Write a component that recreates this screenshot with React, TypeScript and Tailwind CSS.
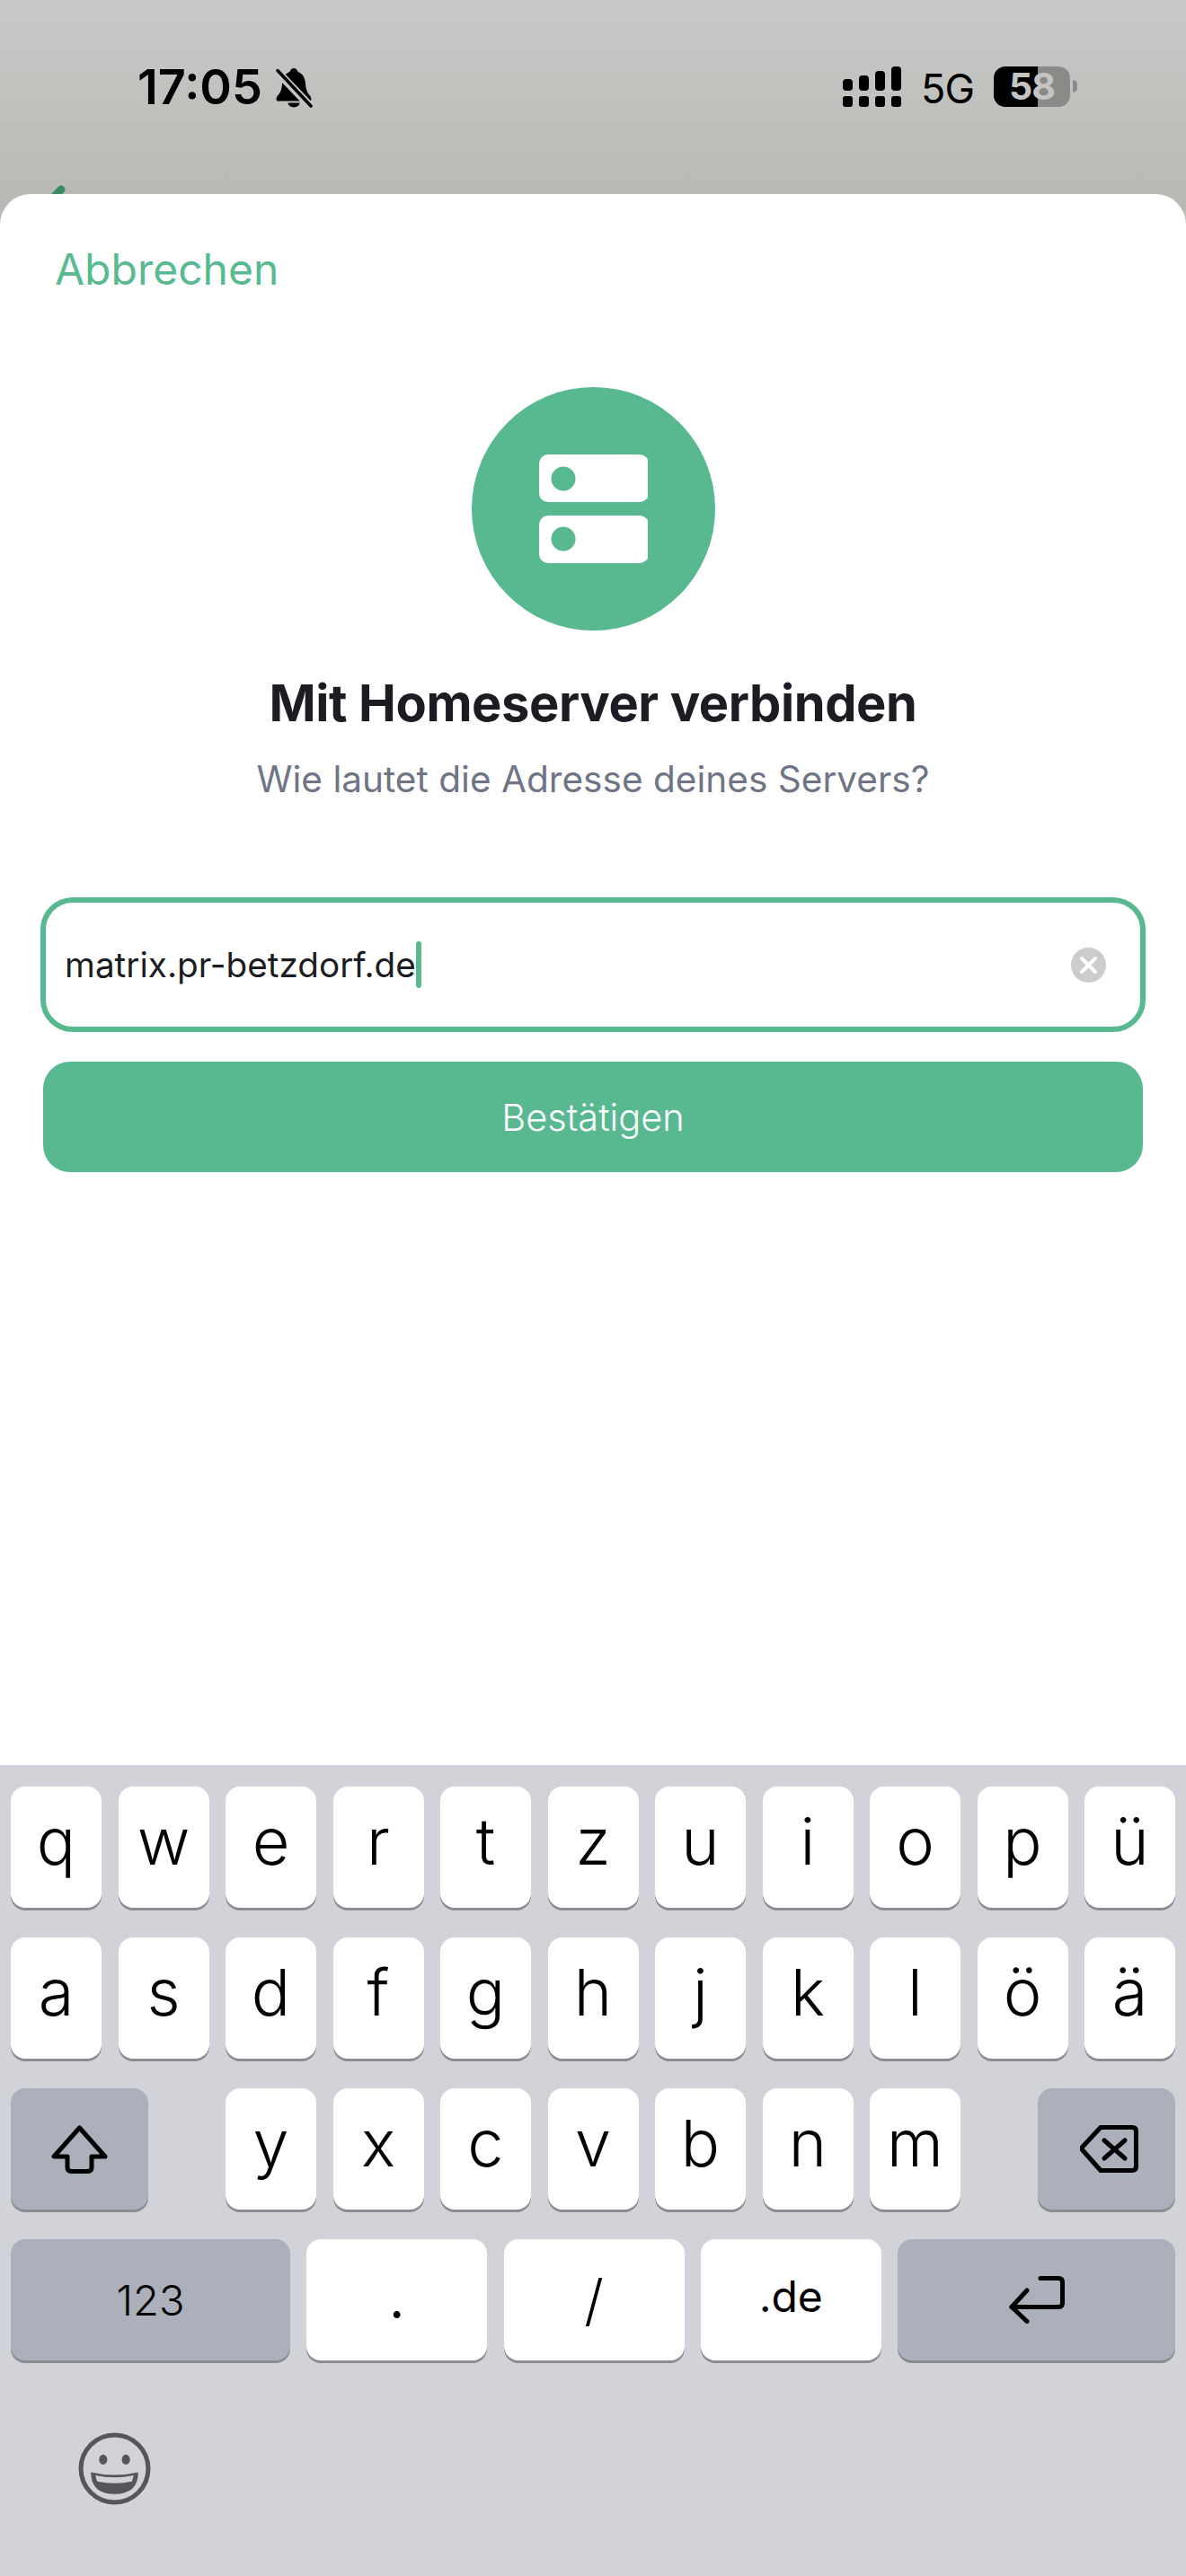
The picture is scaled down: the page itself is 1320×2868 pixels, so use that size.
import React from "react";

const row1 = ["q", "w", "e", "r", "t", "z", "u", "i", "o", "p", "ü"];
const row2 = ["a", "s", "d", "f", "g", "h", "j", "k", "l", "ö", "ä"];
const row3 = ["y", "x", "c", "v", "b", "n", "m"];

function Key({ children }: { children: React.ReactNode }) {
  return (
    <div className="flex h-[135px] w-[101px] items-center justify-center rounded-[16px] bg-white pb-[14px] text-[72px] leading-none font-[320] text-black shadow-[0_3px_0_#8b8c90]">
      {children}
    </div>
  );
}

function Gray({ className, children }: { className: string; children: React.ReactNode }) {
  return (
    <div className={"flex h-[135px] items-center justify-center rounded-[16px] bg-[#abb0ba] shadow-[0_3px_0_#8b8c90] " + className}>
      {children}
    </div>
  );
}

function Wide({ className, children }: { className: string; children: React.ReactNode }) {
  return (
    <div className={"flex h-[135px] items-center justify-center rounded-[16px] bg-white text-black shadow-[0_3px_0_#8b8c90] " + className}>
      {children}
    </div>
  );
}

export default function App() {
  return (
    <div className="flex h-[2868px] w-[1320px] flex-col overflow-hidden bg-white font-['Inter',sans-serif]">
      <div className="relative flex h-[216px] shrink-0 items-start justify-between bg-gradient-to-b from-[#c9c9c8] to-[#b9bab5]">
        <div className="flex items-start pt-[70px] pl-[153px]">
          <span className="text-[54px] leading-[54px] font-semibold text-black">17:05</span>
          <svg className="mt-[5px] ml-[14px]" width="42" height="45" viewBox="0 0 42 45">
            <path d="M21 1c-2.500 0-4 2-4.500 4C11 7 8.500 11.500 8 18c-.5 7-2 10-4.500 13C1 34 1 37 3 37.500h36c2-.5 2-3.500-.5-6.500-2.500-3-4-6-4.500-13-.5-6.500-3-11-8.500-13C25 3 23.500 1 21 1z" fill="#000" />
            <path d="M14.500 39.500a6.500 5 0 0 0 13 0z" fill="#000" />
            <path d="M2 4L40 44" stroke="#c3c3c1" strokeWidth="9" />
            <path d="M3 3.500L40 43" stroke="#000" strokeWidth="3.500" strokeLinecap="round" />
          </svg>
        </div>
        <div className="flex items-start pt-[74px] pr-[121px]">
          <svg width="65" height="45" viewBox="0 0 65 45" className="mr-[22px]">
            <rect x="0" y="33" width="11" height="12" rx="3" />
            <rect x="18" y="33" width="11" height="12" rx="3" />
            <rect x="36" y="33" width="11" height="12" rx="3" />
            <rect x="54" y="33" width="11" height="12" rx="3" />
            <rect x="0" y="14" width="11" height="13" rx="4" />
            <rect x="18" y="10" width="11" height="17" rx="4" />
            <rect x="36" y="5" width="11" height="22" rx="4" />
            <rect x="54" y="0" width="11" height="27" rx="4" />
          </svg>
          <span className="text-[45px] leading-[50px] font-normal tracking-[-1px] text-black">5G</span>
          <div className="ml-[22px] flex h-[45px] w-[85px] items-center justify-center rounded-[13px] bg-[linear-gradient(to_right,#000_49px,#8a8a89_49px)] text-[41px] leading-none font-bold tracking-[-1px] text-[#c4c4c2]">
            58
          </div>
          <div className="mt-[15px] ml-[3px] h-[14px] w-[5px] rounded-r-full bg-[#8a8a89]" />
        </div>
        <svg className="absolute top-[200px] left-[30px]" width="50" height="16" viewBox="0 0 50 16">
          <path d="M38 11L20 30" stroke="#3b8a62" strokeWidth="9" strokeLinecap="round" fill="none" />
        </svg>
      </div>

      <div className="-mt-px flex flex-1 flex-col bg-[#b9bab5]">
        <div className="mt-px flex flex-1 flex-col rounded-t-[34px] bg-white pt-[54px]">
          <div className="pl-[61px] text-[48px] leading-[60px] font-normal text-[#57ba91]">Abbrechen</div>
          <div className="mt-[101px] flex h-[271px] w-[271px] items-center justify-center self-center rounded-full bg-[#58b990]">
            <svg width="122" height="121" viewBox="0 0 122 121">
              <rect x="1" y="0" width="122" height="53" rx="10" fill="#fff" />
              <rect x="1" y="68" width="122" height="53" rx="10" fill="#fff" />
              <circle cx="28" cy="27" r="13.500" fill="#58b990" />
              <circle cx="28" cy="94" r="13.500" fill="#58b990" />
            </svg>
          </div>
          <div className="mt-[49px] text-center text-[56px] leading-[64px] font-bold tracking-[-0.4px] text-[#1b1d22]">Mit Homeserver verbinden</div>
          <div className="mt-[28px] text-center text-[40.600px] leading-[50px] font-normal text-[#6f7585]">Wie lautet die Adresse deines Servers?</div>
          <div className="mx-[45px] mt-[106px] flex h-[150px] items-center rounded-[36px] border-[6px] border-[#58b990] pr-[38px] pl-[21px]">
            <span className="text-[38.700px] leading-[50px] font-normal text-[#1b1d22]">matrix.pr-betzdorf.de</span>
            <span className="h-[52px] w-[6px] rounded-full bg-[#58b990]" />
            <svg className="ml-auto" width="39" height="39" viewBox="0 0 39 39">
              <circle cx="19.500" cy="19.500" r="19.500" fill="#cccccc" />
              <path d="M12 12L27 27M27 12L12 27" stroke="#fff" strokeWidth="4" strokeLinecap="round" />
            </svg>
          </div>
          <div className="mx-[48px] mt-[33px] flex h-[123px] items-center justify-center rounded-[30px] bg-[#58b990] text-[41.500px] leading-[50px] font-[350] text-white">Bestätigen</div>
        </div>
      </div>

      <div className="flex h-[903px] shrink-0 flex-col gap-[33px] bg-[#d1d3d9] px-[12px] pt-[24px]">
        <div className="flex justify-between">
          {row1.map((k) => (
            <Key key={k}>{k}</Key>
          ))}
        </div>
        <div className="flex justify-between">
          {row2.map((k) => (
            <Key key={k}>{k}</Key>
          ))}
        </div>
        <div className="flex justify-between">
          <Gray className="w-[153px]">
            <svg width="63" height="54" viewBox="0 0 63 54" fill="none" stroke="#000" strokeWidth="5" strokeLinejoin="round">
              <path d="M31.500 3L3 35H18V47Q18 51.500 22.500 51.500H40.500Q45 51.500 45 47V35H60Z" />
            </svg>
          </Gray>
          <div className="flex gap-[18.500px]">
            {row3.map((k) => (
              <Key key={k}>{k}</Key>
            ))}
          </div>
          <Gray className="w-[153px]">
            <svg className="ml-[6px]" width="65" height="53" viewBox="0 0 65 53" fill="none" stroke="#000" strokeWidth="5" strokeLinecap="round" strokeLinejoin="round">
              <path d="M23 2.500H58Q62.500 2.500 62.500 7V46Q62.500 50.500 58 50.500H23L3 28Q1 26 3 24Z" />
              <path d="M27 17L50 37M50 17L27 37" />
            </svg>
          </Gray>
        </div>
        <div className="flex justify-between">
          <Gray className="w-[311px] text-[47px] leading-none font-[350] text-black">123</Gray>
          <Wide className="w-[201px] pb-[4px] text-[60px] leading-none font-normal">.</Wide>
          <Wide className="w-[201px] text-[62px] leading-none font-[320]">/</Wide>
          <Wide className="w-[201px] pb-[8px] text-[48px] leading-none font-normal">.de</Wide>
          <Gray className="w-[309px]">
            <svg width="62" height="53" viewBox="0 0 62 53" fill="none" stroke="#000" strokeWidth="5" strokeLinecap="round" strokeLinejoin="round">
              <path d="M35 2.500H55Q59.500 2.500 59.500 7V30Q59.500 34.500 55 34.500H3" />
              <path d="M20 16L3 34.500L20 50.500" />
            </svg>
          </Gray>
        </div>
        <div className="mt-[47px] pl-[75px]">
          <svg width="81" height="81" viewBox="0 0 80 80">
            <circle cx="40" cy="40" r="37" fill="none" stroke="#54565c" strokeWidth="5" />
            <ellipse cx="27.500" cy="30" rx="4.500" ry="5.500" fill="#54565c" />
            <ellipse cx="52.500" cy="30" rx="4.500" ry="5.500" fill="#54565c" />
            <path d="M14 44Q40 50 66 44Q66 68 40 68Q14 68 14 44Z" fill="#54565c" />
            <path d="M19 47.500Q40 52 61 47.500Q60 52 59 54Q40 58 21 54Q20 52 19 47.500Z" fill="#d1d3d9" />
          </svg>
        </div>
      </div>
    </div>
  );
}
